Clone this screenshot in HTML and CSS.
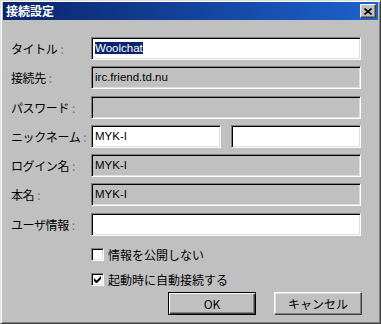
FILE: index.html
```html
<!DOCTYPE html>
<html lang="ja">
<head>
  <meta charset="UTF-8">
  <title>接続設定</title>
  <link rel="stylesheet" href="styles.css">
</head>
<body>

<div class="window">
  <div class="titlebar">
    <span class="title">接続設定</span>
    <span class="close-btn">
      <svg width="8" height="7" viewBox="0 0 8 7"><path d="M0.5 0.5L7.5 6.5M7.5 0.5L0.5 6.5" stroke="#000" stroke-width="1.6" fill="none"/></svg>
    </span>
  </div>

  <div class="content">
    <div class="form-grid">
      <label class="lbl">タイトル<span class="colon">:</span></label>
      <div class="field"><span class="sel">Woolchat</span></div>

      <label class="lbl">接続先<span class="colon">:</span></label>
      <div class="field disabled">irc.friend.td.nu</div>

      <label class="lbl">パスワード<span class="colon">:</span></label>
      <div class="field disabled"></div>

      <label class="lbl">ニックネーム<span class="colon">:</span></label>
      <div class="pair">
        <div class="field">MYK-I</div>
        <div class="field"></div>
      </div>

      <label class="lbl">ログイン名<span class="colon">:</span></label>
      <div class="field disabled">MYK-I</div>

      <label class="lbl">本名<span class="colon">:</span></label>
      <div class="field disabled">MYK-I</div>

      <label class="lbl">ユーザ情報<span class="colon">:</span></label>
      <div class="field"></div>
    </div>

    <div class="checks">
      <div class="check-row">
        <span class="checkbox"></span>
        <span>情報を公開しない</span>
      </div>
      <div class="check-row">
        <span class="checkbox">
          <svg width="7" height="7" viewBox="0 0 7 7"><path d="M0 2v3l2 2h1l4-4V0L2.5 4.5z" fill="#000"/></svg>
        </span>
        <span>起動時に自動接続する</span>
      </div>
    </div>

    <div class="buttons">
      <div class="btn default"><span>OK</span></div>
      <div class="btn"><span>キャンセル</span></div>
    </div>
  </div>
</div>

</body>
</html>
```

FILE: styles.css
```css
body {
  margin: 0;
  font-family: "Noto Sans CJK JP", "Liberation Sans", sans-serif;
  font-size: 12px;
  color: #000;
  background: #c0c0c0;
}
.window {
  width: 381px;
  height: 324px;
  box-sizing: border-box;
  background: #c0c0c0;
  border: 1px solid;
  border-color: #dfdfdf #404040 #404040 #dfdfdf;
  box-shadow: inset 1px 1px #fff, inset -1px -1px #808080;
  padding: 1px 2px 2px 2px;
}
.titlebar {
  height: 18px;
  display: flex;
  align-items: center;
  justify-content: space-between;
  padding: 0 2px 0 3px;
  background: linear-gradient(to right, #0a246a, #1c62cc);
  color: #fff;
}
.title {
  font-weight: bold;
  font-size: 12px;
  line-height: 18px;
}
.close-btn {
  width: 16px;
  height: 14px;
  box-sizing: border-box;
  display: flex;
  align-items: center;
  justify-content: center;
  background: #c0c0c0;
  border: 1px solid;
  border-color: #fff #404040 #404040 #fff;
  box-shadow: inset -1px -1px #808080;
}
.content {
  padding: 17px 0 0 8px;
}
.form-grid {
  display: grid;
  grid-template-columns: 80px 270px;
  grid-auto-rows: 23px;
  row-gap: 6.3px;
}
.lbl {
  display: flex;
  align-items: center;
  white-space: nowrap;
  letter-spacing: -0.4px;
}
.colon {
  color: #777;
  padding-left: 3px;
}
.field {
  height: 23px;
  box-sizing: border-box;
  background: #fff;
  border: 1px solid;
  border-color: #808080 #fff #fff #808080;
  box-shadow: inset 1px 1px #000, inset -1px -1px #dfdfdf;
  padding: 0 2px 0 3px;
  line-height: 20px;
  font-family: "Liberation Sans", sans-serif;
  font-size: 11.5px;
  white-space: nowrap;
  overflow: hidden;
}
.field.disabled {
  background: #c0c0c0;
}
.sel {
  background: #0a246a;
  color: #fff;
}
.pair {
  display: flex;
  gap: 10px;
}
.pair .field {
  width: 130px;
}
.checks {
  margin: 6px 0 0 80px;
  display: flex;
  flex-direction: column;
}
.check-row {
  height: 25px;
  display: flex;
  align-items: center;
  gap: 4px;
}
.checkbox {
  width: 13px;
  height: 13px;
  box-sizing: border-box;
  background: #fff;
  border: 1px solid;
  border-color: #808080 #fff #fff #808080;
  box-shadow: inset 1px 1px #000, inset -1px -1px #dfdfdf;
  display: flex;
  align-items: center;
  justify-content: center;
}
.buttons {
  display: flex;
  gap: 18px;
  margin: 0 0 0 157px;
}
.btn {
  width: 88px;
  height: 23px;
  box-sizing: border-box;
  border: 1px solid;
  border-color: #fff #404040 #404040 #fff;
  box-shadow: inset -1px -1px #808080, inset 1px 1px #dfdfdf;
  display: flex;
  align-items: center;
  justify-content: center;
}
.btn.default {
  border: 1px solid #000;
  box-shadow: inset 1px 1px #fff, inset -1px -1px #404040, inset -2px -2px #808080;
}
```
